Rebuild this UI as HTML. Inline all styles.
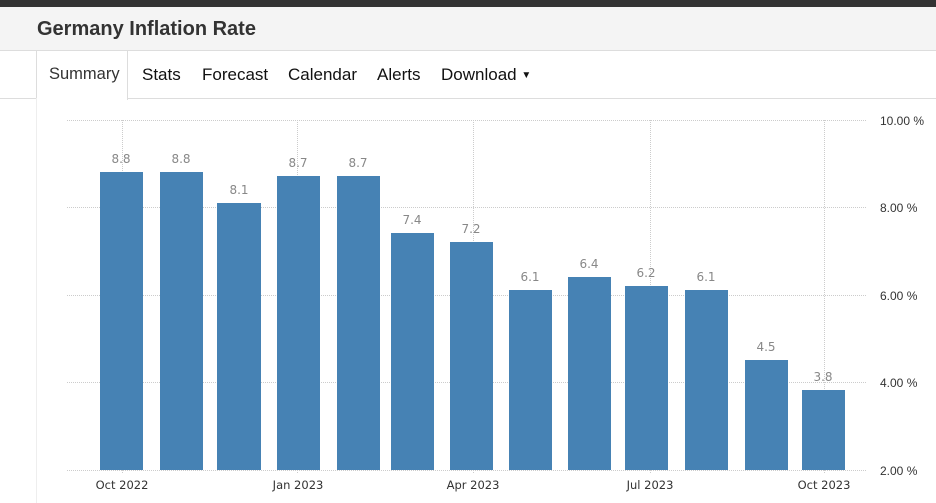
<!DOCTYPE html>
<html><head><meta charset="utf-8"><style>
body{margin:0;width:936px;height:503px;overflow:hidden;background:#fff;font-family:"Liberation Sans",sans-serif;position:relative}
.top{position:absolute;left:0;top:0;width:936px;height:7px;background:#333}
.hdr{position:absolute;left:0;top:7px;width:936px;height:43px;background:#f4f4f4;border-bottom:1px solid #ddd}
.hdr h1{margin:0;position:absolute;left:37px;top:11px;font-size:20px;font-weight:bold;color:#333}
.tabs{position:absolute;left:0;top:51px;width:936px;height:47px;border-bottom:1px solid #ddd}
.tab{position:absolute;top:14px;font-size:17px;color:#111}
.active{position:absolute;left:36px;top:51px;width:90px;height:49px;background:#fff;border-left:1px solid #ddd;border-right:1px solid #ddd}
.side{position:absolute;left:36px;top:98px;width:1px;height:405px;background:#eee}
</style></head><body>
<div class="top"></div>
<div class="hdr"><h1>Germany Inflation Rate</h1></div>
<div class="tabs">
<span class="tab" style="left:142px">Stats</span>
<span class="tab" style="left:202px">Forecast</span>
<span class="tab" style="left:288px">Calendar</span>
<span class="tab" style="left:377px">Alerts</span>
<span class="tab" style="left:441px">Download <span style="font-size:10px;position:relative;top:-2px">▼</span></span>
</div>
<div class="active"><span style="position:absolute;left:12px;top:14px;font-size:16.5px;color:#333">Summary</span></div>
<div class="side"></div>
<svg style="position:absolute;left:0;top:0" width="936" height="503">
<g stroke="#ccc" stroke-dasharray="1,1" stroke-width="1">
<line x1="67" y1="120.5" x2="866" y2="120.5"/>
<line x1="67" y1="207.5" x2="866" y2="207.5"/>
<line x1="67" y1="295.5" x2="866" y2="295.5"/>
<line x1="67" y1="382.5" x2="866" y2="382.5"/>
<line x1="67" y1="470.5" x2="866" y2="470.5"/>
<line x1="122.5" y1="120" x2="122.5" y2="474"/>
<line x1="297.5" y1="120" x2="297.5" y2="474"/>
<line x1="473.5" y1="120" x2="473.5" y2="474"/>
<line x1="650.5" y1="120" x2="650.5" y2="474"/>
<line x1="824.5" y1="120" x2="824.5" y2="474"/>
</g>
<g fill="#4682b4">
<rect x="100" y="172" width="43" height="298"/>
<rect x="160" y="172" width="43" height="298"/>
<rect x="217" y="203" width="44" height="267"/>
<rect x="277" y="176" width="43" height="294"/>
<rect x="337" y="176" width="43" height="294"/>
<rect x="391" y="233" width="43" height="237"/>
<rect x="450" y="242" width="43" height="228"/>
<rect x="509" y="290" width="43" height="180"/>
<rect x="568" y="277" width="43" height="193"/>
<rect x="625" y="286" width="43" height="184"/>
<rect x="685" y="290" width="43" height="180"/>
<rect x="745" y="360" width="43" height="110"/>
<rect x="802" y="390" width="43" height="80"/>
</g>
<g fill="#888" font-family="DejaVu Sans,sans-serif" font-size="12" text-anchor="middle">
<text x="121" y="163">8.8</text><text x="181" y="163">8.8</text><text x="239" y="194">8.1</text>
<text x="298" y="167">8.7</text><text x="358" y="167">8.7</text><text x="412" y="224">7.4</text>
<text x="471" y="233">7.2</text><text x="530" y="281">6.1</text><text x="589" y="268">6.4</text>
<text x="646" y="277">6.2</text><text x="706" y="281">6.1</text><text x="766" y="351">4.5</text>
<text x="823" y="381">3.8</text>
</g>
<g fill="#333" font-family="Liberation Sans,sans-serif" font-size="12">
<text x="880" y="125">10.00 %</text><text x="880" y="212">8.00 %</text><text x="880" y="300">6.00 %</text>
<text x="880" y="387">4.00 %</text><text x="880" y="475">2.00 %</text>
</g>
<g fill="#333" font-family="DejaVu Sans,sans-serif" font-size="11.5" text-anchor="middle">
<text x="122" y="489">Oct 2022</text><text x="298" y="489">Jan 2023</text><text x="473" y="489">Apr 2023</text>
<text x="650" y="489">Jul 2023</text><text x="824" y="489">Oct 2023</text>
</g>
</svg>
</body></html>
